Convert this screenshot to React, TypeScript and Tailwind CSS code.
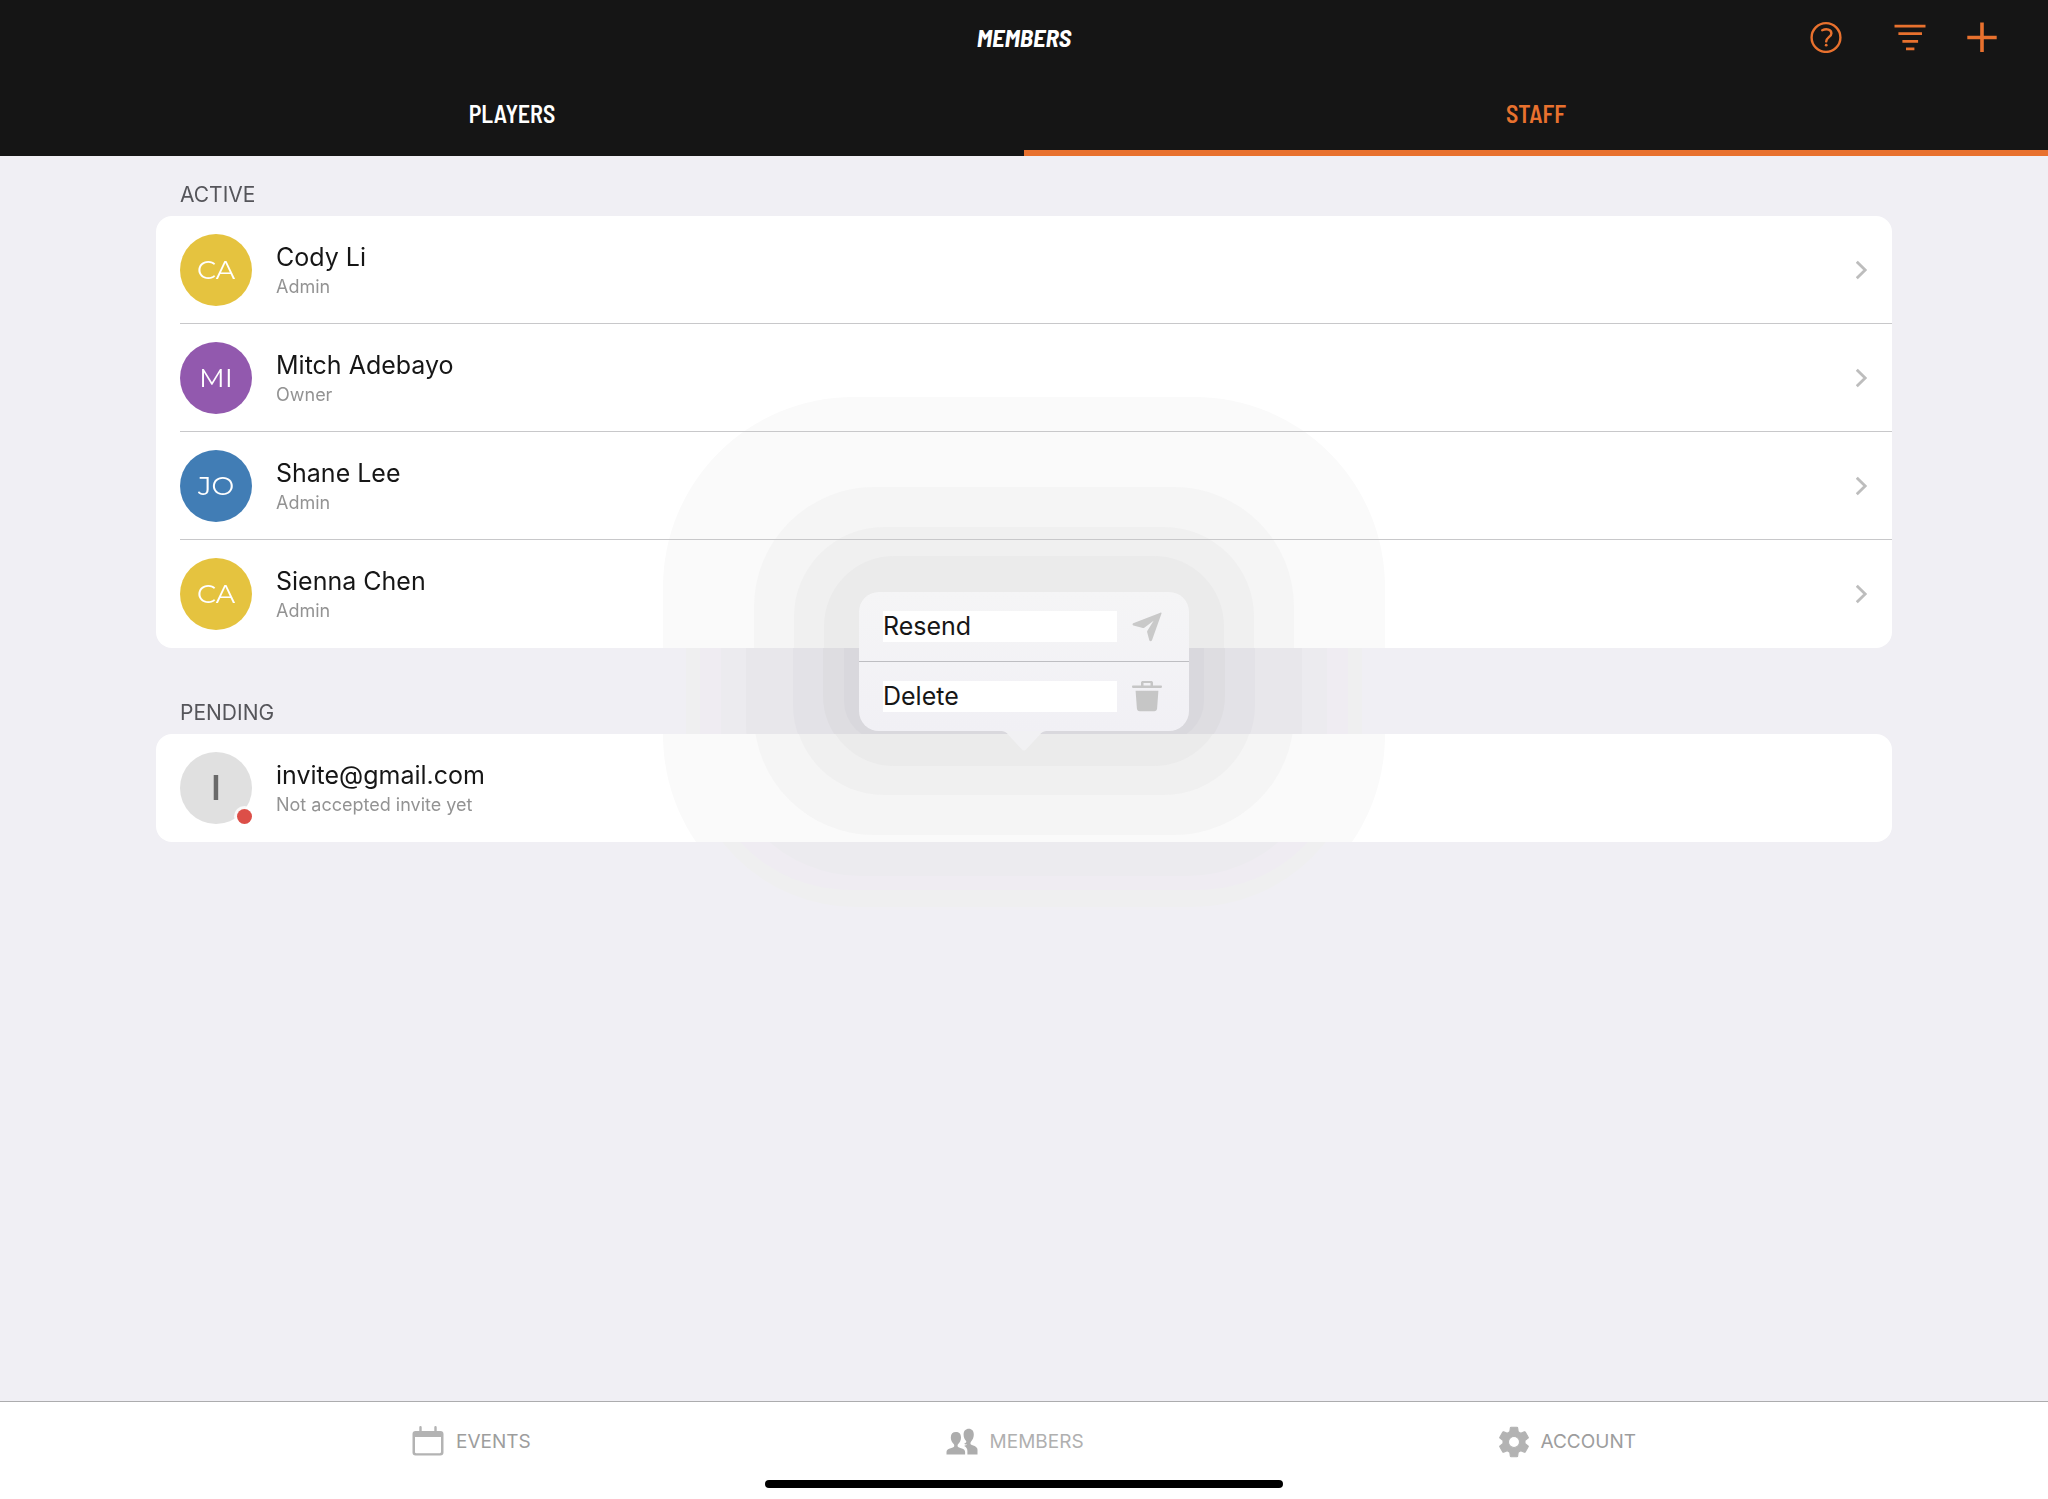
import React from "react";

const activeMembers = [
  { id: 1, name: "Cody Li", role: "Admin", initials: "CA", color: "bg-[#e5c33f]" },
  { id: 2, name: "Mitch Adebayo", role: "Owner", initials: "MI", color: "bg-[#9259ae]" },
  { id: 3, name: "Shane Lee", role: "Admin", initials: "JO", color: "bg-[#417db5]" },
  { id: 4, name: "Sienna Chen", role: "Admin", initials: "CA", color: "bg-[#e5c33f]" },
];

// Shadow steps seen on the page background, below the cards
const pageRings = [
  "w-[676px] h-[492px] rounded-[170px] bg-[#efeff0]",
  "w-[648px] h-[458px] rounded-[150px] bg-[#efecf2]",
  "w-[606px] h-[430px] rounded-[140px] bg-[#ecebef]",
  "w-[556px] h-[350px] rounded-[110px] bg-[#e8e7eb]",
  "w-[462px] h-[268px] rounded-[90px] bg-[#e3e2e7]",
  "w-[402px] h-[210px] rounded-[70px] bg-[#dedde1]",
  "w-[360px] h-[160px] rounded-[40px] bg-[#d9d8dd]",
];

// Shadow steps seen on the white cards
const cardRings = [
  "w-[722px] h-[528px] rounded-[190px] bg-[#fafafa]",
  "w-[540px] h-[348px] rounded-[120px] bg-[#f5f5f5]",
  "w-[460px] h-[268px] rounded-[90px] bg-[#f0f0f0]",
  "w-[400px] h-[210px] rounded-[70px] bg-[#ebebeb]",
];

function HelpIcon() {
  return (
    <svg viewBox="0 0 32 32" className="w-8 h-8" fill="none" stroke="currentColor" strokeWidth="2.4" strokeLinecap="round" aria-hidden>
      <circle cx="16" cy="16.500" r="14.4" />
      <path d="M12.2 9.300c4.6-2.3 9.2-.6 9.2 3.1 0 3.4-5.2 4.2-5.2 8" />
      <circle cx="16.2" cy="24.200" r="1.4" fill="currentColor" stroke="none" />
    </svg>
  );
}

function FilterIcon() {
  return (
    <svg viewBox="0 0 32 32" className="w-8 h-8" fill="none" stroke="currentColor" strokeWidth="2.8" aria-hidden>
      <path d="M.5 5.200h31M4.400 12.600h23.600M8.400 20.400h15.700M12 27.800h8.400" />
    </svg>
  );
}

function PlusIcon() {
  return (
    <svg viewBox="0 0 30 30" className="w-[30px] h-[30px]" fill="none" stroke="currentColor" strokeWidth="3.6" aria-hidden>
      <path d="M15 .5v29.500M.3 15.500h29.4" />
    </svg>
  );
}

function ChevronIcon() {
  return (
    <svg viewBox="0 0 12 20" className="w-3 h-5" fill="none" stroke="#bdbdbd" strokeWidth="2.8" aria-hidden>
      <path d="M.8 1.800 9.200 10 .8 18.200" />
    </svg>
  );
}

function SendIcon() {
  return (
    <svg viewBox="0 0 30 30" className="w-[30px] h-[30px]" fill="currentColor" aria-hidden>
      <path d="M29.300.7c.3.100.3.500.2.800L20 28.300c-.5 1.400-2.300 1.400-2.700 0l-2.200-8.200c-.1-.5 0-1 .3-1.400l6.200-10-9.300 7c-.4.300-.9.400-1.400.300l-9.500-2.600c-1-.3-1.200-1.600-.2-2.100L28.400.7c.3-.2.600-.2.900 0Z" />
    </svg>
  );
}

function TrashIcon() {
  return (
    <svg viewBox="0 .8 30 32" className="w-[30px] h-8" fill="currentColor" aria-hidden>
      <path d="M10.800.9h8.400c1 0 1.800.7 1.800 1.700v2.700h8c1.300 0 1.300 2.400 0 2.400H1C-.3 7.700-.3 5.300 1 5.300h8V2.600C9 1.600 9.800.9 10.800.9Zm.7 2v2.400h7V2.900h-7Z" fillRule="evenodd" />
      <path d="M3.600 10.500h22.800l-1.300 17.800c-.1 1.500-1.200 2.700-2.800 2.700H7.700c-1.600 0-2.700-1.200-2.800-2.700L3.600 10.500Z" />
    </svg>
  );
}

function CalendarIcon() {
  return (
    <svg viewBox="0 0 32 32" className="w-8 h-8" aria-hidden>
      <path d="M8.500 1.200v4M23.500 1.200v4" stroke="#b3b3b3" strokeWidth="2.400" strokeLinecap="round" />
      <path d="M3.500 5h25c1.900 0 3 1.200 3 3v18.500c0 1.800-1.100 3-3 3h-25c-1.900 0-3-1.200-3-3V8c0-1.800 1.100-3 3-3ZM3 11v15c0 .8.500 1.200 1.200 1.200h23.600c.7 0 1.200-.4 1.200-1.200V11H3Z" fill="#b3b3b3" fillRule="evenodd" />
    </svg>
  );
}

function PeopleIcon() {
  return (
    <svg viewBox="0 0 32 28" className="w-8 h-7" fill="#adadad" aria-hidden>
      <path d="M.5 26.500v-2.600c0-2 1.400-2.900 3.400-3.500 2.200-.7 4-1 4.300-2.200.2-.8 0-1.500-.5-2.200-1.600-1.600-2.900-3.800-2.900-6.600C4.800 5.800 6.800 4 9.900 4s5.100 1.800 5.100 5.400c0 2.800-1.200 5-2.800 6.600-.6.700-.8 1.400-.6 2.200.4 1.200 2.100 1.500 4.300 2.200 1.900.6 3.200 1.500 3.200 3.500v2.600H.5Z" />
      <path d="M22.800.8c3.100 0 5 2.200 5 5.700 0 3-1.100 5.200-2.700 6.900-.9 1.100-.9 2.700.2 3.300 1.800 1 6.200 1.600 6.200 5v4.800H21.400v-3.600c0-2.500-1.300-4-3.200-5 .8-.4 2.500-.4 2.900-1.300-.9 0-2.200-.1-2.900-.9 1.800-.6 2.500-1.700 1.900-2.600-1.500-1.600-2.500-3.700-2.500-6.600 0-3.500 2.100-5.700 5.200-5.700Z" />
    </svg>
  );
}

function GearIcon() {
  return (
    <svg viewBox="2.200 1.800 19.600 20.400" className="w-[30px] h-8" fill="#b3b3b3" aria-hidden>
      <path d="M19.140 12.940c.04-.3.060-.61.060-.94s-.020-.64-.070-.94l2.030-1.580a.49.49 0 0 0 .120-.61l-1.920-3.320a.49.49 0 0 0-.59-.22l-2.390.96c-.5-.38-1.030-.7-1.620-.94l-.36-2.540a.48.48 0 0 0-.48-.41h-3.840c-.24 0-.43.170-.47.410l-.36 2.540c-.59.240-1.130.570-1.620.940l-2.390-.96a.49.49 0 0 0-.59.220L2.740 8.870c-.12.210-.08.470.120.610l2.030 1.580c-.05.300-.09.630-.09.940s.020.640.070.940l-2.030 1.580a.49.49 0 0 0-.12.610l1.920 3.320c.120.220.370.290.590.220l2.390-.96c.5.380 1.030.700 1.620.940l.360 2.540c.050.240.240.410.480.410h3.840c.240 0 .440-.17.470-.41l.360-2.540c.590-.24 1.130-.56 1.620-.94l2.390.960c.220.080.470 0 .590-.22l1.920-3.320a.49.49 0 0 0-.12-.61l-2.010-1.580ZM12 15.600a3.600 3.600 0 1 1 0-7.200 3.600 3.600 0 0 1 0 7.200Z" stroke="#b3b3b3" strokeWidth=".7" />
    </svg>
  );
}

function SectionTitle({ children }: { children: React.ReactNode }) {
  return <h2 className="px-6 mb-1.5 text-[21px] leading-[30px] text-[#55555a]">{children}</h2>;
}

function MemberText({ name, note }: { name: string; note: string }) {
  return (
    <div className="flex-1 text-left">
      <div className="text-[25px] leading-8 text-[#161616]">{name}</div>
      <div className="mt-0.5 text-[18px] leading-6 text-[#939393]">{note}</div>
    </div>
  );
}

export default function App() {
  return (
    <div className="min-h-screen flex flex-col bg-[#f0eff4] font-['Inter',sans-serif]">
      <header className="bg-[#151515] font-['Barlow_Semi_Condensed','Barlow_Condensed','Liberation_Sans_Narrow',sans-serif]">
        <div className="h-[74px] grid grid-cols-[1fr_auto_1fr] items-center">
          <h1 className="col-start-2 text-[25px] leading-8 font-bold italic text-white">MEMBERS</h1>
          <div className="flex items-center justify-end pr-[51px] text-[#e8712e]">
            <button aria-label="Help" className="mr-[52px]">
              <HelpIcon />
            </button>
            <button aria-label="Filter" className="mr-[41px]">
              <FilterIcon />
            </button>
            <button aria-label="Add member">
              <PlusIcon />
            </button>
          </div>
        </div>
        <div role="tablist" className="grid grid-cols-2 h-[82px] text-[24px] leading-8 font-semibold">
          <button role="tab" aria-selected="false" className="pt-1 border-b-6 border-transparent text-white">
            PLAYERS
          </button>
          <button role="tab" aria-selected="true" className="pt-1 border-b-6 border-[#e8712e] text-[#e8712e]">
            STAFF
          </button>
        </div>
      </header>

      <main className="relative isolate flex-1 bg-[#f0eff4] px-[156px] pt-6">
        <section className="relative z-10">
          <SectionTitle>ACTIVE</SectionTitle>
          <ul className="rounded-2xl bg-white overflow-hidden">
            {activeMembers.map((m) => (
              <li key={m.id} className="group pl-6">
                <button className="w-full h-[108px] pr-6 flex items-center gap-6 border-b border-[#c8c8ca] group-last:border-transparent">
                  <span className={`w-[72px] h-[72px] rounded-full flex items-center justify-center font-['Montserrat','Lato',sans-serif] text-[27px] leading-8 text-white ${m.color}`}>
                    {m.initials}
                  </span>
                  <MemberText name={m.name} note={m.role} />
                  <ChevronIcon />
                </button>
              </li>
            ))}
          </ul>
        </section>

        <section className="relative z-10 mt-[50px]">
          <SectionTitle>PENDING</SectionTitle>
          <ul className="rounded-2xl bg-white">
            <li>
              <button className="w-full h-[108px] px-6 flex items-center gap-6">
                <span className="relative w-[72px] h-[72px] rounded-full flex items-center justify-center bg-[#e0e0e0] text-[34px] leading-8 font-semibold text-[#6a6a6a]">
                  I
                  <span className="absolute right-0 bottom-0 w-[15px] h-[15px] rounded-full bg-[#dc4f48] ring-3 ring-white/80" />
                </span>
                <MemberText name="invite@gmail.com" note="Not accepted invite yet" />
              </button>
            </li>
          </ul>
        </section>

        {/* Stepped popover shadow */}
        <div className="absolute left-1/2 top-[505px]" aria-hidden>
          {pageRings.map((ring) => (
            <div key={ring} className={`absolute z-0 -translate-x-1/2 -translate-y-1/2 ${ring}`} />
          ))}
          {cardRings.map((ring) => (
            <div key={ring} className={`absolute z-20 -translate-x-1/2 -translate-y-1/2 mix-blend-darken ${ring}`} />
          ))}
        </div>

        <div role="menu" className="absolute z-30 left-1/2 top-[436px] -translate-x-1/2 w-[330px] rounded-[20px] bg-linear-to-b from-[#f5f5f6] to-[#f1f0f5]">
          <button role="menuitem" className="w-full h-[70px] px-6 flex items-center gap-3 border-b border-[#bebec2]">
            <span className="flex-1 bg-white text-left text-[25px] leading-[31px] text-[#161616]">Resend</span>
            <span className="w-9 flex justify-center text-[#c9c9c9]">
              <SendIcon />
            </span>
          </button>
          <button role="menuitem" className="w-full h-[69px] px-6 flex items-center gap-3">
            <span className="flex-1 bg-white text-left text-[25px] leading-[31px] text-[#161616]">Delete</span>
            <span className="w-9 flex justify-center text-[#c6c6c6]">
              <TrashIcon />
            </span>
          </button>
          <svg viewBox="0 0 44 20" className="absolute left-1/2 top-full -translate-x-1/2 w-11 h-5" fill="#f1f1f3" aria-hidden>
            <path d="M0 0h44c-3 .3-4.500 1.500-6.500 4L24 18.500c-1.200 1.300-2.800 1.300-4 0L6.500 4C4.500 1.500 3 .3 0 0Z" />
          </svg>
        </div>
      </main>

      <footer className="h-[98px] bg-white border-t border-[#acacae]">
        <nav className="h-[78px] px-[412px] pt-px flex items-center justify-between text-[19px] leading-6 text-[#9d9d9d]">
          <a href="#events" className="flex items-center gap-3">
            <CalendarIcon />
            EVENTS
          </a>
          <a href="#members" className="flex items-center gap-3 text-[#b0b0b0]">
            <PeopleIcon />
            MEMBERS
          </a>
          <a href="#account" className="flex items-center gap-3">
            <GearIcon />
            ACCOUNT
          </a>
        </nav>
        <div className="mx-auto w-[518px] h-2 rounded-full bg-black" />
      </footer>
    </div>
  );
}
